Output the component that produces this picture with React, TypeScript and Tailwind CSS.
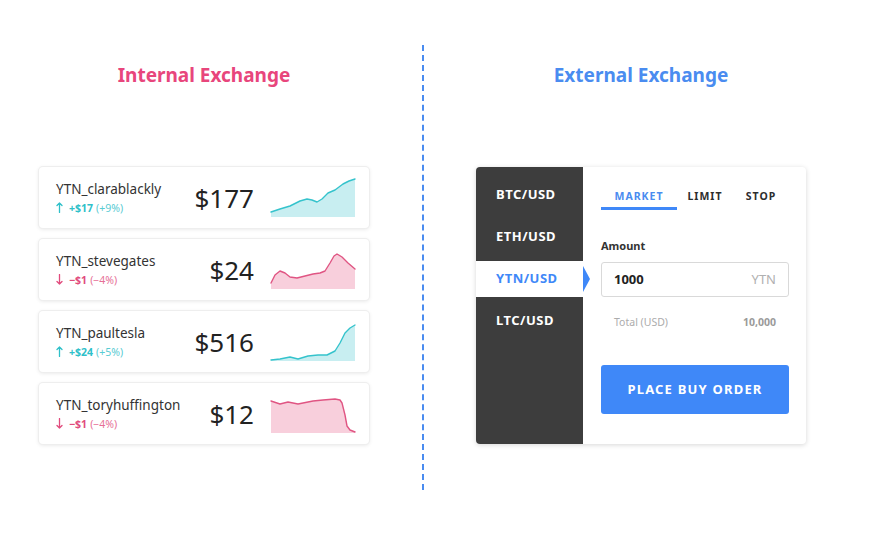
import React from 'react';

type Trend = 'up' | 'down';

interface Ticker {
  name: string;
  price: string;
  delta: string;
  pct: string;
  trend: Trend;
  points: [number, number][];
}

const TICKERS: Ticker[] = [
  {
    name: 'YTN_clarablackly', price: '$177', delta: '+$17', pct: '(+9%)', trend: 'up',
    points: [[1, 33], [10, 30], [20, 27], [30, 22], [37, 20], [42, 21], [47, 23], [52, 20], [58, 14], [65, 11], [73, 5], [79, 2], [85, 0]],
  },
  {
    name: 'YTN_stevegates', price: '$24', delta: '\u2212$1', pct: '(\u22124%)', trend: 'down',
    points: [[1, 32], [5, 24], [10, 20], [15, 22], [20, 26], [27, 27], [35, 25], [43, 23], [50, 22], [55, 20], [60, 12], [64, 5], [67, 3], [72, 6], [78, 12], [85, 18]],
  },
  {
    name: 'YTN_paultesla', price: '$516', delta: '+$24', pct: '(+5%)', trend: 'up',
    points: [[1, 37], [10, 36], [20, 34], [28, 36], [38, 33], [48, 32], [57, 32], [65, 28], [70, 20], [75, 10], [80, 5], [85, 2]],
  },
  {
    name: 'YTN_toryhuffington', price: '$12', delta: '\u2212$1', pct: '(\u22124%)', trend: 'down',
    points: [[1, 6], [10, 9], [18, 7], [28, 9], [43, 6], [53, 5], [65, 4], [70, 5], [72, 8], [75, 20], [77, 31], [80, 35], [85, 37]],
  },
];

function Sparkline({ points, trend }: { points: [number, number][]; trend: Trend }) {
  const line = points.map(([x, y], i) => `${i === 0 ? 'M' : 'L'}${x} ${y}`).join(' ');
  const first = points[0];
  const last = points[points.length - 1];
  const area = `${line} L${last[0]} 38 L${first[0]} 38 Z`;
  const stroke = trend === 'up' ? '#35c3cc' : '#e05583';
  const fill = trend === 'up' ? '#c8eef1' : '#f8cfdc';
  return (
    <svg width="86" height="38" viewBox="0 0 86 38" className="shrink-0 overflow-visible">
      <path d={area} fill={fill} />
      <path d={line} fill="none" stroke={stroke} strokeWidth="1.4" strokeLinejoin="round" strokeLinecap="round" />
    </svg>
  );
}

// thin arrow used next to the change value
function TrendArrow({ up }: { up: boolean }) {
  return (
    <svg width="7" height="11" viewBox="0 0 7 11" className="mr-[6px]" fill="none" stroke="currentColor" strokeWidth="1.3" strokeLinecap="round" strokeLinejoin="round">
      {up ? <path d="M3.5 10.5 V1 M1 3.5 L3.5 1 L6 3.5" /> : <path d="M3.5 0.5 V10 M1 7.5 L3.5 10 L6 7.5" />}
    </svg>
  );
}

function TickerCard({ t }: { t: Ticker }) {
  const up = t.trend === 'up';
  return (
    <div className="flex h-[61px] items-center rounded-[4px] bg-white pl-[17px] pr-[13px] shadow-[0_1px_4px_rgba(0,0,0,0.12)] ring-1 ring-[#eeeeee]">
      <div className="flex flex-1 flex-col">
        <span className="text-[13.5px] leading-4 text-[#333333]">{t.name}</span>
        <span className={`mt-1 flex items-center text-[10.5px] leading-[14px] ${up ? 'text-[#2fc0c9]' : 'text-[#e14b7d]'}`}>
          <TrendArrow up={up} />
          <span className="font-bold">{t.delta}</span>
          <span className="ml-[3px] opacity-80">{t.pct}</span>
        </span>
      </div>
      <span className="mr-4 text-[26px] leading-none text-[#222222]">{t.price}</span>
      <Sparkline points={t.points} trend={t.trend} />
    </div>
  );
}

const PAIRS = ['BTC/USD', 'ETH/USD', 'YTN/USD', 'LTC/USD'];

function ExchangePanel() {
  const active = 'YTN/USD';
  return (
    <div className="flex h-[277px] overflow-hidden rounded-[4px] bg-white shadow-[0_1px_5px_rgba(0,0,0,0.16)]">
      <div className="flex w-[107px] flex-col gap-[6px] bg-[#3d3d3d] pt-[10px]">
        {PAIRS.map(p => (
          <div
            key={p}
            className={`relative flex h-9 items-center pl-5 text-[13px] font-bold tracking-[0.5px] ${p === active ? 'bg-white text-[#3f88f8]' : 'text-white'}`}
          >
            {p}
            {p === active && (
              <svg width="8" height="26" viewBox="0 0 8 26" className="absolute right-[-8px] top-[5px]">
                <path d="M0 0 L7 13 L0 26 Z" fill="#3f88f8" />
              </svg>
            )}
          </div>
        ))}
      </div>
      <div className="flex flex-1 flex-col pl-[18px] pr-[17px] pt-[22px]">
        <div className="flex text-[10.5px] font-bold tracking-[1px]">
          <div className="w-[76px] border-b-[3px] border-[#3f88f8] pb-1 text-center leading-[14px] text-[#4a8cf0]">MARKET</div>
          <div className="w-[56px] pb-1 text-center leading-[14px] text-[#2d2d2d]">LIMIT</div>
          <div className="w-[56px] pb-1 text-center leading-[14px] text-[#2d2d2d]">STOP</div>
        </div>
        <div className="mt-[29px] text-[11px] font-bold leading-[14px] text-[#333333]">Amount</div>
        <div className="mt-[9px] flex h-[35px] items-center justify-between rounded-[3px] border border-[#d9d9d9] px-[12px]">
          <span className="text-[13px] font-bold text-[#222222]">1000</span>
          <span className="text-[13px] text-[#b0b0b0]">YTN</span>
        </div>
        <div className="mt-[18px] flex items-center justify-between px-[13px] text-[10.5px] leading-[14px]">
          <span className="text-[#acacac]">Total (USD)</span>
          <span className="font-bold text-[#9a9a9a]">10,000</span>
        </div>
        <button className="mt-[36px] h-[49px] rounded-[3px] bg-[#3f88f8] text-[13px] font-bold tracking-[1.2px] text-white">
          PLACE BUY ORDER
        </button>
      </div>
    </div>
  );
}

export default function App() {
  return (
    <div className="h-[534px] w-[871px] overflow-hidden bg-white" style={{ fontFamily: '"Noto Sans", "Open Sans", sans-serif' }}>
      <div className="flex pl-[39px] pt-[45px]">
        <div className="flex w-[330px] flex-col">
          <h2 className="mt-[17px] text-center text-[19px] font-bold leading-[26px] text-[#e8467c]">Internal Exchange</h2>
          <div className="mt-[79px] flex flex-col gap-[11px]">
            {TICKERS.map(t => <TickerCard key={t.name} t={t} />)}
          </div>
        </div>
        <div className="ml-[53px] h-[445px] border-l-2 border-dashed border-[#4a8cf0]" />
        <div className="ml-[52px] flex w-[330px] flex-col">
          <h2 className="mt-[17px] text-center text-[19px] font-bold leading-[26px] text-[#4a8cf0]">External Exchange</h2>
          <div className="mt-[79px]">
            <ExchangePanel />
          </div>
        </div>
      </div>
    </div>
  );
}
